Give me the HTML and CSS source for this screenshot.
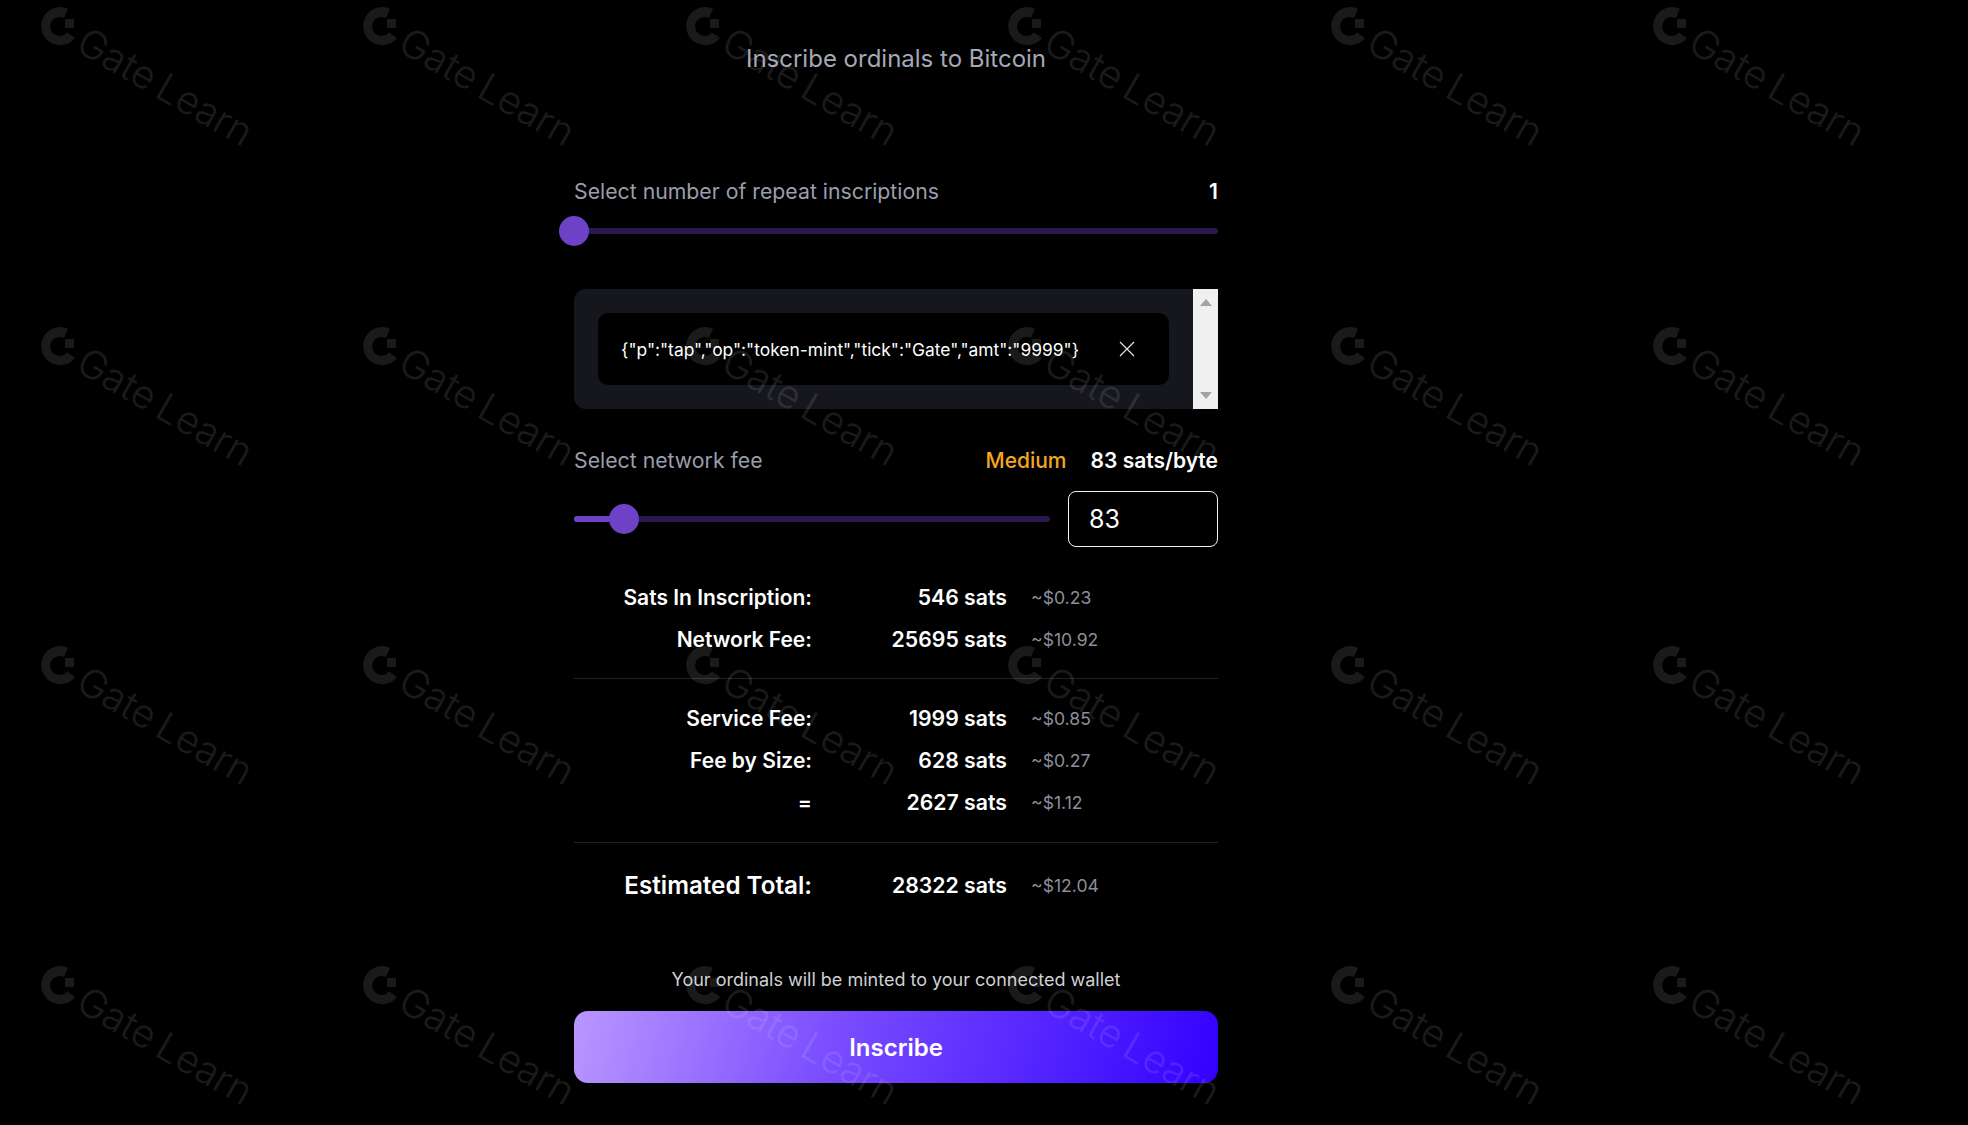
FILE: index.html
```html
<!DOCTYPE html>
<html lang="en">
<head>
    <meta charset="UTF-8">
    <meta name="viewport" content="width=device-width, initial-scale=1.0">
    <title>Inscribe ordinals to Bitcoin</title>
    <link rel="stylesheet" href="styles.css">
</head>
<body>
<div class="container">
    <h1 class="title">Inscribe ordinals to Bitcoin</h1>

    <div class="row-head repeat-head">
        <span class="label">Select number of repeat inscriptions</span>
        <span class="value">1</span>
    </div>
    <div class="slider">
        <div class="thumb thumb-start"></div>
    </div>

    <div class="text-panel">
        <div class="panel-body">
            <div class="text-item">
                <span>{"p":"tap","op":"token-mint","tick":"Gate","amt":"9999"}</span>
                <svg class="close" viewBox="0 0 16 16" width="16" height="16">
                    <path d="M1 1L15 15M15 1L1 15" stroke="#e6e6e6" stroke-width="1.2" fill="none"/>
                </svg>
            </div>
        </div>
        <div class="scrollbar">
            <div class="arrow arrow-up"></div>
            <div class="arrow arrow-down"></div>
        </div>
    </div>

    <div class="row-head fee-head">
        <span class="label">Select network fee</span>
        <div class="fee-info">
            <span class="medium">Medium</span>
            <span class="value">83 sats/byte</span>
        </div>
    </div>
    <div class="fee-controls">
        <div class="slider slider-fee">
            <div class="fill"></div>
            <div class="thumb thumb-fee"></div>
        </div>
        <input class="fee-input" type="text" value="83">
    </div>

    <div class="fees">
        <div class="fee-row"><span class="fee-label">Sats In Inscription:</span><span class="fee-sats">546 sats</span><span class="fee-usd">~$0.23</span></div>
        <div class="fee-row"><span class="fee-label">Network Fee:</span><span class="fee-sats">25695 sats</span><span class="fee-usd">~$10.92</span></div>
    </div>
    <div class="fees fees-line">
        <div class="fee-row"><span class="fee-label">Service Fee:</span><span class="fee-sats">1999 sats</span><span class="fee-usd">~$0.85</span></div>
        <div class="fee-row"><span class="fee-label">Fee by Size:</span><span class="fee-sats">628 sats</span><span class="fee-usd">~$0.27</span></div>
        <div class="fee-row"><span class="fee-label">=</span><span class="fee-sats">2627 sats</span><span class="fee-usd">~$1.12</span></div>
    </div>
    <div class="fees fees-line fees-total">
        <div class="fee-row"><span class="fee-label total-label">Estimated Total:</span><span class="fee-sats">28322 sats</span><span class="fee-usd">~$12.04</span></div>
    </div>

    <p class="note">Your ordinals will be minted to your connected wallet</p>
    <button class="button">Inscribe</button>
</div>

<!-- watermark tiles, filled in below -->
<div class="watermark" id="watermark"></div>

<script>
    const tile = `
        <svg class="mark" viewBox="0 0 322 160" width="322" height="160">
            <path d="M68 8.8A19 19 0 1 0 75 38L67 32.5A9.5 9.5 0 1 1 64 18Z" fill="#fff"/>
            <rect x="65" y="19" width="9" height="9" fill="#fff"/>
            <text x="0" y="0" transform="translate(74 50) rotate(30)">Gate Learn</text>
        </svg>`;
    document.getElementById('watermark').innerHTML = tile.repeat(24);
</script>
</body>
</html>
```

FILE: styles.css
```css
* {
    box-sizing: border-box;
}
body {
    margin: 0;
    height: 1125px;
    overflow: hidden;
    background-color: #000;
    color: #fff;
    font-family: Inter, "Noto Sans", sans-serif;
}
.container {
    width: 644px;
    margin-left: 574px;
    padding-top: 44px;
}
.title {
    margin: 0;
    height: 30px;
    font-size: 24px;
    line-height: 30px;
    font-weight: 400;
    text-align: center;
    color: #a5a8b6;
}
.row-head {
    display: flex;
    justify-content: space-between;
    align-items: baseline;
    height: 24px;
    font-size: 21px;
    line-height: 24px;
}
.repeat-head {
    margin-top: 105px;
}
.label {
    font-size: 21.25px;
    color: #9a9dac;
}
.value {
    font-weight: 600;
}
.slider {
    position: relative;
    height: 6px;
    margin-top: 25px;
    border-radius: 3px;
    background: #2a1950;
}
.thumb {
    position: absolute;
    top: -12px;
    width: 30px;
    height: 30px;
    border-radius: 50%;
    background: #6d42c7;
}
.thumb-start {
    left: -15px;
}
.text-panel {
    display: flex;
    height: 120px;
    margin-top: 55px;
}
.panel-body {
    flex: 1;
    padding: 24px;
    background: #16171d;
    border-radius: 12px 0 0 12px;
}
.text-item {
    display: flex;
    justify-content: space-between;
    align-items: center;
    height: 72px;
    padding: 0 34px 0 23px;
    border-radius: 10px;
    background: #000;
    font-size: 17.4px;
}
.scrollbar {
    display: flex;
    flex-direction: column;
    justify-content: space-between;
    align-items: center;
    width: 25px;
    padding: 10px 0;
    background: #f0f0f0;
}
.arrow {
    width: 0;
    height: 0;
    border-left: 6px solid transparent;
    border-right: 6px solid transparent;
}
.arrow-up {
    border-bottom: 7px solid #a3a3a3;
}
.arrow-down {
    border-top: 7px solid #a3a3a3;
}
.fee-head {
    margin-top: 39px;
}
.fee-info {
    display: flex;
    gap: 24px;
}
.medium {
    color: #f5a623;
    font-weight: 500;
}
.fee-controls {
    display: flex;
    align-items: center;
    gap: 18px;
    margin-top: 19px;
}
.slider-fee {
    flex: 1;
    margin-top: 0;
}
.fill {
    width: 50px;
    height: 6px;
    border-radius: 3px;
    background: #6d42c7;
}
.thumb-fee {
    left: 35px;
}
.fee-input {
    width: 150px;
    height: 56px;
    padding: 0 20px;
    border: 1px solid #f2f2f2;
    border-radius: 8px;
    background: #000;
    color: #fff;
    font-family: inherit;
    font-size: 25px;
}
.fees {
    margin-top: 29px;
}
.fees-line {
    margin-top: 18px;
    padding-top: 18px;
    border-top: 1px solid #222;
}
.fees-total {
    margin-top: 19px;
    padding-top: 21px;
}
.fee-row {
    display: flex;
    align-items: center;
    height: 42px;
}
.fee-label {
    width: 238px;
    font-size: 21px;
    font-weight: 600;
    text-align: right;
}
.total-label {
    font-size: 24.2px;
}
.fee-sats {
    width: 195px;
    font-size: 21.25px;
    font-weight: 600;
    text-align: right;
}
.fee-usd {
    margin-left: 24px;
    font-size: 17.6px;
    color: #8b8e9b;
}
.note {
    margin: 61px 0 0;
    height: 26px;
    font-size: 18px;
    line-height: 26px;
    text-align: center;
    color: #cfcfd4;
}
.button {
    display: block;
    width: 100%;
    height: 72px;
    margin-top: 18px;
    border: none;
    border-radius: 14px;
    background: linear-gradient(105deg, #b997ff 0%, #7a4dff 40%, #3300ff 100%);
    color: #fff;
    font-family: inherit;
    font-size: 24px;
    font-weight: 600;
}
.watermark {
    position: absolute;
    top: 0;
    left: 0;
    display: grid;
    grid-template-columns: repeat(6, 322.4px);
    grid-template-rows: repeat(3, 319.6px) 160px;
    pointer-events: none;
    opacity: 0.1;
}
.mark {
    display: block;
    overflow: visible;
}
.mark text {
    font-family: Inter, sans-serif;
    font-size: 39px;
    font-weight: 300;
    word-spacing: -4px;
    fill: #fff;
}
```
